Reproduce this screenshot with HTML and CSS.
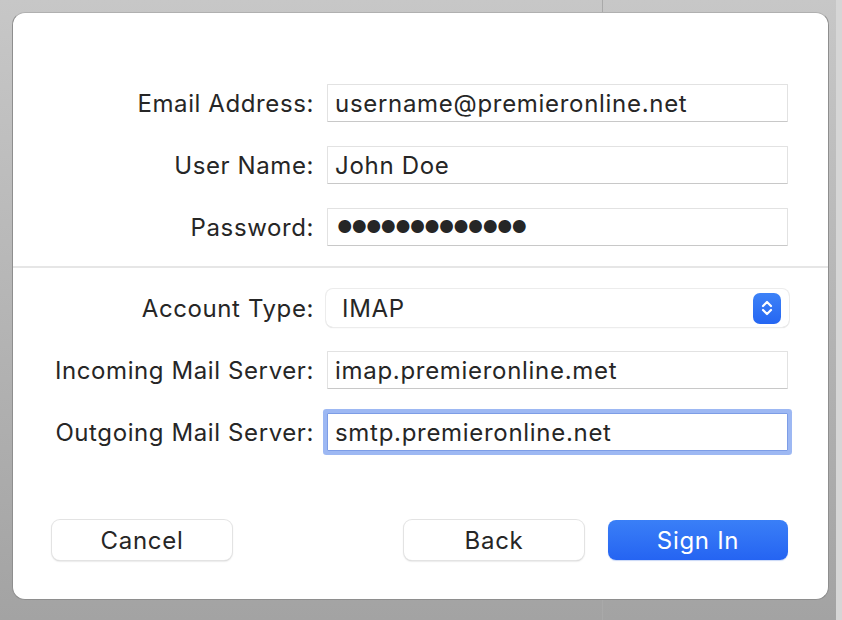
FILE: index.html
```html
<!DOCTYPE html>
<html lang="en">
<head>
    <meta charset="UTF-8">
    <title>Account Setup</title>
    <link rel="stylesheet" href="styles.css">
</head>
<body>

    <div class="sheet">
        <!-- Credentials -->
        <div class="fields">
            <label for="email">Email Address:</label>
            <input type="text" id="email" value="username@premieronline.net">

            <label for="user">User Name:</label>
            <input type="text" id="user" value="John Doe">

            <label for="pass">Password:</label>
            <div class="field dots">&#9679;&#9679;&#9679;&#9679;&#9679;&#9679;&#9679;&#9679;&#9679;&#9679;&#9679;&#9679;&#9679;</div>
        </div>

        <hr class="divider">

        <!-- Server settings -->
        <div class="fields">
            <label>Account Type:</label>
            <div class="popup">
                <span>IMAP</span>
                <span class="stepper">
                    <svg width="14" height="20" viewBox="0 0 14 20">
                        <path d="M3 8 L7 4 L11 8 M3 12 L7 16 L11 12" fill="none" stroke="#fff" stroke-width="2.2" stroke-linecap="round" stroke-linejoin="round"/>
                    </svg>
                </span>
            </div>

            <label for="incoming">Incoming Mail Server:</label>
            <input type="text" id="incoming" value="imap.premieronline.met">

            <label for="outgoing">Outgoing Mail Server:</label>
            <input type="text" id="outgoing" class="focused" value="smtp.premieronline.net">
        </div>

        <div class="buttons">
            <button class="button">Cancel</button>
            <span class="spacer"></span>
            <button class="button">Back</button>
            <button class="button primary">Sign In</button>
        </div>
    </div>

</body>
</html>
```

FILE: styles.css
```css
body {
    margin: 0;
    height: 620px;
    padding: 12px 13px 0 12px;
    box-sizing: border-box;
    font-family: Inter, "Noto Sans", sans-serif;
    color: #262626;
    background:
        linear-gradient(to right, transparent 602px, #a9a9a9 602px, #a9a9a9 603px, transparent 603px),
        linear-gradient(to right, transparent 836px, #d6d6d6 836px),
        linear-gradient(#c7c7c7, #a3a3a3);
}
.sheet {
    height: 588px;
    box-sizing: border-box;
    background-color: #fff;
    border: 1px solid #8e8e8e;
    border-top-color: #b0b0b0;
    border-radius: 13px;
    padding-top: 71px;
}
.fields {
    display: grid;
    grid-template-columns: 301px 461px;
    column-gap: 13px;
    row-gap: 24px;
    align-items: center;
}
label {
    text-align: right;
    font-size: 24px;
    letter-spacing: 0.6px;
    white-space: nowrap;
}
input, .field {
    height: 38px;
    box-sizing: border-box;
    padding: 0 7px;
    border: 1px solid #e2e2e2;
    border-bottom-color: #c8c8c8;
    border-radius: 1px;
    font-family: inherit;
    font-size: 24px;
    letter-spacing: 0.7px;
    color: #262626;
    background: #fff;
    outline: none;
}
.dots {
    display: flex;
    align-items: center;
    font-size: 17px;
    letter-spacing: -1px;
    padding-left: 9px;
}
.focused {
    box-shadow: 0 0 0 4px #9db8f3;
    border-color: #7d9de6;
}
.divider {
    border: none;
    height: 2px;
    background: #e6e6e6;
    margin: 20px 0 21px;
}
.popup {
    height: 38px;
    margin-left: -1px;
    width: 463px;
    box-sizing: border-box;
    display: flex;
    align-items: center;
    justify-content: space-between;
    padding: 0 8px 0 16px;
    border-radius: 7px;
    box-shadow: 0 0 0 1px #ececec, 0 1px 1px #d6d6d6;
    font-size: 24px;
    letter-spacing: 0.7px;
}
.stepper {
    width: 28px;
    height: 31px;
    border-radius: 7px;
    background: linear-gradient(#3d82f7, #2566f2);
    display: flex;
    align-items: center;
    justify-content: center;
}
.buttons {
    display: flex;
    gap: 24px;
    margin: 69px 40px 0 39px;
}
.spacer {
    flex: 1;
}
.button {
    width: 180px;
    height: 40px;
    font-family: inherit;
    font-size: 24px;
    letter-spacing: 0.7px;
    color: #262626;
    background: #fff;
    border: none;
    border-radius: 8px;
    box-shadow: 0 0 0 1px #e3e3e3, 0 1px 2px #bdbdbd;
}
.primary {
    color: #fff;
    background: linear-gradient(#3a7ff7, #2564f2);
    box-shadow: 0 1px 1px #c9d8f7;
}
```
